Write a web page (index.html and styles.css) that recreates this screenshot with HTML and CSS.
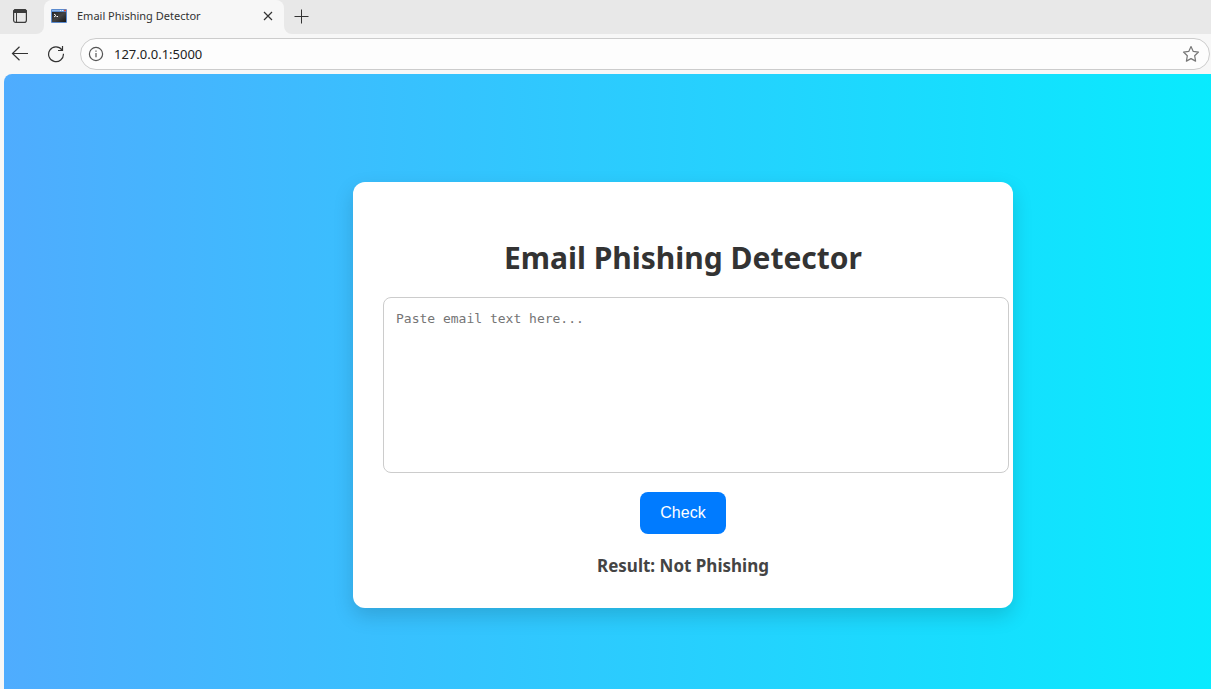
FILE: index.html
```html
<!DOCTYPE html>
<html lang="en">
<head>
<meta charset="utf-8">
<meta name="viewport" content="width=device-width, initial-scale=1">
<title>Email Phishing Detector</title>
<link rel="stylesheet" href="styles.css">
</head>
<body>
<header class="browser">
  <div class="tab-strip">
    <button class="icon-button tab-actions" type="button" aria-label="Tab actions">
      <svg width="16" height="16" viewBox="0 0 16 16" fill="none" stroke="#3b3b3b"><rect x="1.6" y="1.6" width="12.8" height="12.8" rx="2.2" stroke-width="1.2"/><path d="M1.5 4.5V3.5a2 2 0 0 1 2-2h9a2 2 0 0 1 2 2v1z" fill="#3b3b3b"/><path d="M4.5 5v9.500"/></svg>
    </button>
    <div class="tab">
      <svg width="16" height="14" viewBox="0 0 16 14"><defs><linearGradient id="term" x1="0" y1="0" x2="1" y2="1"><stop offset="0" stop-color="#222"/><stop offset=".5" stop-color="#444"/><stop offset="1" stop-color="#151515"/></linearGradient></defs><rect width="16" height="14" rx="1" fill="#5b8bcf"/><path d="M1 1.500h14" stroke="#8fb8ea"/><path d="M9 1.500h1M11 1.500h1" stroke="#e8f0fa"/><path d="M13 1.500h2" stroke="#e0442e" stroke-width="1.500"/><path d="M1 3h14v10H1z" fill="url(#term)"/><path d="M3 5l2 1.500L3 8M5.500 7.500H7" stroke="#fff" fill="none"/></svg>
      <span class="tab-title">Email Phishing Detector</span>
      <button class="icon-button" type="button" aria-label="Close tab">
        <svg width="10" height="10" viewBox="0 0 10 10" fill="none" stroke="#333" stroke-width="1.200"><path d="M1 1l8 8M9 1l-8 8"/></svg>
      </button>
    </div>
    <button class="icon-button new-tab" type="button" aria-label="New tab">
      <svg width="15" height="15" viewBox="0 0 15 15" fill="none" stroke="#333"><path d="M.5 7.500h14M7.500.5v14"/></svg>
    </button>
  </div>
  <div class="toolbar">
    <button class="icon-button" type="button" aria-label="Back">
      <svg width="18" height="16" viewBox="0 0 18 16" fill="none" stroke="#333" stroke-width="1.200"><path d="M17 7.500H1.500M8.500.8L1.500 7.500l7 6.700"/></svg>
    </button>
    <button class="icon-button" type="button" aria-label="Refresh">
      <svg width="18" height="18" viewBox="0 0 18 18" fill="none" stroke="#333" stroke-width="1.200"><path d="M14.900 4.800A7.400 7.400 0 1 0 16.400 8.800M15.500 1v4.500H11"/></svg>
    </button>
    <div class="address">
      <svg width="16" height="16" viewBox="0 0 16 16" fill="none" stroke="#555" stroke-width="1.200"><circle cx="8" cy="8" r="6.600"/><path d="M8 7v4.200M8 4.500v1.300"/></svg>
      <input class="url" type="text" aria-label="Address" value="127.0.0.1:5000">
      <button class="icon-button" type="button" aria-label="Add to favorites">
        <svg width="18" height="18" viewBox="0 0 18 18" fill="none" stroke="#777" stroke-width="1.200" stroke-linejoin="round"><path d="M9 1.500l2.250 4.900 5.250.65-3.850 3.650.95 5.400L9 13.600l-4.600 2.500.95-5.400L1.500 7.050l5.250-.65z"/></svg>
      </button>
    </div>
  </div>
</header>
<main class="page">
  <form class="container" onsubmit="return false">
    <h1 class="heading"><label for="email">Email Phishing Detector</label></h1>
    <textarea class="email-text" id="email" placeholder="Paste email text here..."></textarea>
    <button class="check" type="submit">Check</button>
    <p class="result">Result: Not Phishing</p>
  </form>
</main>
</body>
</html>
```

FILE: styles.css
```css
body {
  margin: 0;
  min-height: 100vh;
  display: flex;
  flex-direction: column;
  background: #f7f7f7;
  font-family: "Noto Sans", "Open Sans", sans-serif;
}

.icon-button {
  display: flex;
  padding: 0;
  border: 0;
  background: none;
}

.tab-strip {
  display: flex;
  align-items: center;
  height: 34px;
  background: linear-gradient(#e8e8e8 50%, #f7f7f7 50%);
}

.tab-actions {
  align-self: stretch;
  align-items: center;
  width: 44px;
  padding: 0 12px 2px;
  border-radius: 0 0 8px 0;
  background: #e8e8e8;
}

.tab {
  display: flex;
  align-items: center;
  gap: 10px;
  box-sizing: border-box;
  width: 240px;
  height: 34px;
  padding: 0 11px 2px 7px;
  border-radius: 8px 8px 0 0;
  background: #f7f7f7;
}

.tab-title {
  flex: 1;
  color: #333;
  font-size: 11px;
  line-height: 16px;
}

.new-tab {
  align-self: stretch;
  flex: 1;
  align-items: center;
  padding: 0 10px 2px;
  border-radius: 0 0 0 8px;
  background: #e8e8e8;
}

.toolbar {
  display: flex;
  align-items: center;
  gap: 18px;
  height: 40px;
  padding: 0 1px 0 11px;
}

.address {
  flex: 1;
  display: flex;
  align-items: center;
  box-sizing: border-box;
  height: 32px;
  margin-left: -3px;
  padding: 0 9px 0 7px;
  border: 1px solid #ccc;
  border-radius: 16px;
  background: #fdfdfd;
}

.url {
  flex: 1;
  min-width: 0;
  padding: 0 10px;
  border: 0;
  outline: 0;
  background: none;
  color: #222;
  font-family: inherit;
  font-size: 13px;
  line-height: 20px;
}

.page {
  flex: 1;
  margin-left: 4px;
  padding: 108px 20px 20px 349px;
  border-radius: 8px 0 0 0;
  background: linear-gradient(to right, #4facfe, #00f2fe 112%);
}

.container {
  display: flex;
  flex-direction: column;
  align-items: center;
  box-sizing: border-box;
  max-width: 660px;
  padding: 30px;
  border-radius: 12px;
  background: #fff;
  box-shadow: 0 8px 20px rgba(0, 0, 0, 0.15);
}

.heading {
  margin: 24px 0 18px;
  color: #333;
  font-size: 30px;
  line-height: 43px;
}

.email-text {
  align-self: flex-start;
  width: 100%;
  height: 150px;
  padding: 12px;
  border: 1px solid #ccc;
  border-radius: 8px;
  resize: none;
  font-family: "DejaVu Sans Mono", monospace;
  font-size: 13px;
  line-height: 18px;
}

.email-text::placeholder {
  color: #757575;
}

.check {
  margin-top: 19px;
  padding: 12px 20px;
  border: 0;
  border-radius: 8px;
  background: #007bff;
  color: #fff;
  font-family: "Liberation Sans", Arial, sans-serif;
  font-size: 16px;
  line-height: 18px;
}

.result {
  margin: 20px 0 0;
  color: #444;
  font-size: 17px;
  font-weight: 700;
  line-height: 24px;
}
```
